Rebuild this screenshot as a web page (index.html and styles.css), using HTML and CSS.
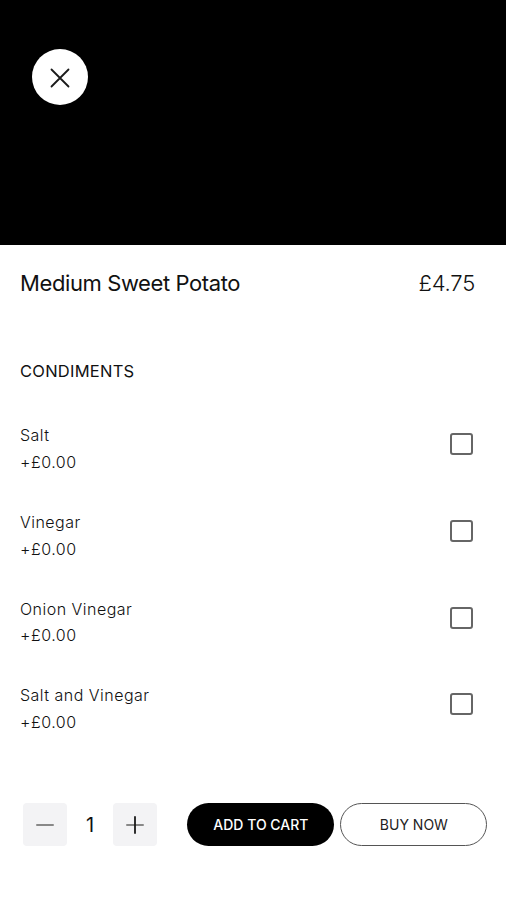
FILE: index.html
```html
<!DOCTYPE html>
<html lang="en">
  <head>
    <meta charset="UTF-8" />
    <title>Medium Sweet Potato</title>
    <link rel="stylesheet" href="styles.css">
  </head>
  <body>
    <div class="hero">
      <button class="close" type="button" aria-label="Close">
        <svg width="20" height="20" viewBox="0 0 20 20">
          <path d="M1.5 1.5L18.5 18.5M18.5 1.5L1.5 18.5" />
        </svg>
      </button>
    </div>

    <div class="title">
      <h1>Medium Sweet Potato</h1>
      <span class="price">£4.75</span>
    </div>

    <h2>CONDIMENTS</h2>
    <div class="options">
      <label class="option">
        <span class="info"><span class="name">Salt</span><span class="extra">+£0.00</span></span>
        <input type="checkbox" />
      </label>
      <label class="option">
        <span class="info"><span class="name">Vinegar</span><span class="extra">+£0.00</span></span>
        <input type="checkbox" />
      </label>
      <label class="option">
        <span class="info"><span class="name">Onion Vinegar</span><span class="extra">+£0.00</span></span>
        <input type="checkbox" />
      </label>
      <label class="option">
        <span class="info"><span class="name">Salt and Vinegar</span><span class="extra">+£0.00</span></span>
        <input type="checkbox" />
      </label>
    </div>

    <div class="footer">
      <button class="step" type="button" aria-label="Less">
        <svg width="18" height="18" viewBox="0 0 18 18">
          <path class="bar" d="M1 9H17" />
        </svg>
      </button>
      <span class="count">1</span>
      <button class="step" type="button" aria-label="More">
        <svg width="18" height="18" viewBox="0 0 18 18">
          <path class="bar" d="M1 9H17" />
          <path d="M9 1V17" />
        </svg>
      </button>
      <button class="btn add" type="button">ADD TO CART</button>
      <button class="btn buy" type="button">BUY NOW</button>
    </div>
  </body>
</html>
```

FILE: styles.css
```css
body {
  margin: 0;
  height: 900px;
  background-color: #fff;
  color: #111;
  font-family: Inter, "Liberation Sans", sans-serif;
  overflow: hidden;
}

button {
  padding: 0;
  border: none;
  font-family: inherit;
}

.hero {
  height: 245px;
  padding: 49px 32px;
  box-sizing: border-box;
  background-color: #000;
}

.close {
  display: flex;
  align-items: center;
  justify-content: center;
  width: 56px;
  height: 56px;
  border-radius: 50%;
  background-color: #fff;
}

.close svg {
  margin-top: 1px;
}

svg path {
  fill: none;
  stroke: #1a1a1a;
  stroke-width: 1.8;
  stroke-linecap: round;
}

.title {
  display: flex;
  justify-content: space-between;
  height: 76px;
  padding: 0 31px 0 20px;
  line-height: 76px;
  font-size: 22px;
}

h1 {
  margin: 0;
  font-size: 22px;
  font-weight: 400;
  letter-spacing: -0.4px;
}

.price {
  font-weight: 300;
  letter-spacing: -0.2px;
}

h2 {
  margin: 35px 0 0;
  padding-left: 20px;
  font-size: 16.5px;
  font-weight: 400;
  line-height: 30px;
  letter-spacing: 0.25px;
}

.options {
  padding: 36px 33px 0 20px;
}

.option {
  display: flex;
  justify-content: space-between;
  height: 86.8px;
}

.info {
  display: flex;
  flex-direction: column;
  font-size: 16px;
  font-weight: 300;
  line-height: 26.8px;
}

.name {
  letter-spacing: 0.48px;
}

.extra {
  letter-spacing: 0.5px;
}

.option input {
  appearance: none;
  width: 23px;
  height: 22px;
  margin: 11px 0 0;
  border: 2px solid #666;
  border-radius: 3px;
}

.footer {
  display: flex;
  align-items: center;
  margin-top: 34px;
  padding-left: 23px;
}

.step {
  display: flex;
  align-items: center;
  justify-content: center;
  width: 44px;
  height: 43px;
  border-radius: 4px;
  background-color: #f3f3f5;
}

.step .bar {
  stroke: #888;
  stroke-width: 2;
}

.count {
  width: 46px;
  font-size: 20px;
  text-align: center;
}

.btn {
  width: 147px;
  height: 43px;
  border-radius: 22px;
  font-size: 14px;
}

.add {
  margin-left: 30.4px;
  background-color: #000;
  color: #fff;
  font-weight: 500;
}

.buy {
  margin-left: 6px;
  border: 1px solid #555;
  background-color: #fff;
  color: #222;
}
```
